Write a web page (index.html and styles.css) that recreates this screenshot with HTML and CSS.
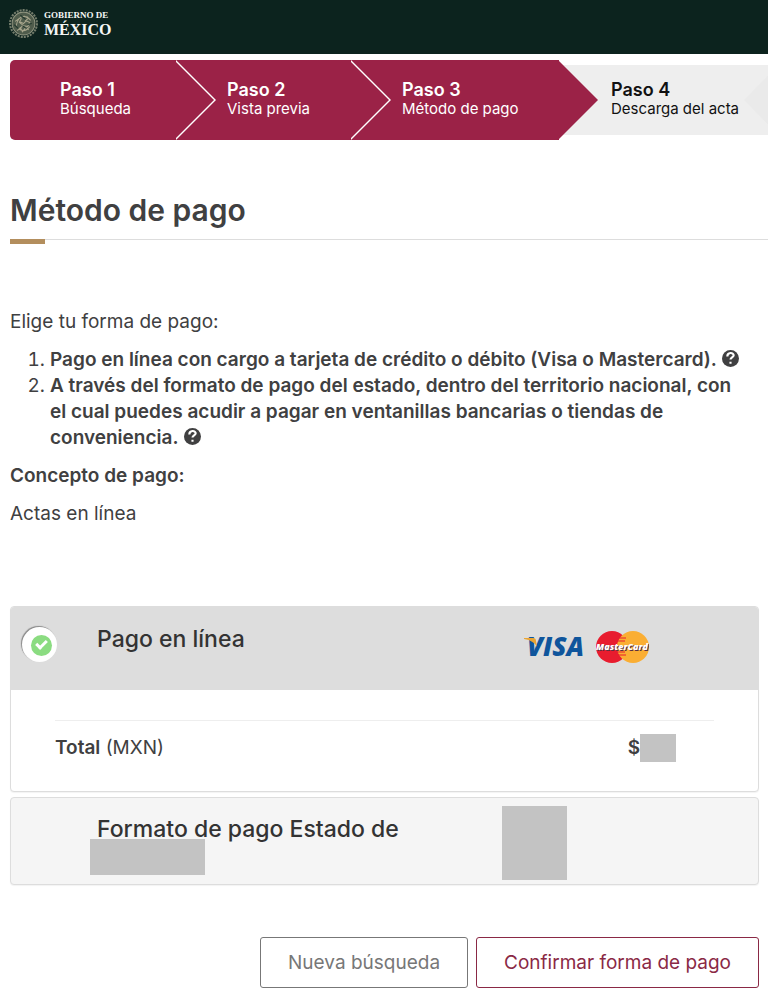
FILE: index.html
```html
<!DOCTYPE html>
<html lang="es">
<head>
  <meta charset="UTF-8">
  <meta name="viewport" content="width=device-width, initial-scale=1">
  <title>Método de pago</title>
  <link rel="stylesheet" href="styles.css">
</head>
<body>

<header class="header">
  <a href="#" class="brand">
    <svg class="seal" viewBox="0 0 30 30" fill="none" stroke="#8f947f">
      <circle cx="15" cy="15" r="13" stroke-width="2" stroke-dasharray="2 1" opacity=".8"/>
      <circle cx="15" cy="15" r="11" fill="#4f5c4c" stroke-width="1"/>
      <path d="M8 17c1-6 4-9 8-9l4 2-3 2 4 2-2 4-5-1-3 4M10 20c4 3 8 2 11-2M7 13l4-3M11 13l4 2 3-3M9 22l3-3 2 4 3-4 3 2M18 8l4 4M13 10l-2 4 4 3" stroke="#a7a58c" stroke-width="1"/>
      <path d="M6 16l4 4M12 7l5 4M19 16l4-1M14 17l4 3" stroke="#20362c"/>
    </svg>
    <span class="brandText">
      <small>GOBIERNO DE</small>
      <strong>MÉXICO</strong>
    </span>
  </a>
</header>

<ol class="steps">
  <li class="done"><strong>Paso 1</strong><span>Búsqueda</span></li>
  <li class="done"><strong>Paso 2</strong><span>Vista previa</span></li>
  <li class="done"><strong>Paso 3</strong><span>Método de pago</span></li>
  <li class="next"><strong>Paso 4</strong><span>Descarga del acta</span></li>
</ol>

<main class="content">
  <h1 class="title">Método de pago</h1>

  <section class="info">
    <p>Elige tu forma de pago:</p>
    <ol>
      <li><strong>Pago en línea con cargo a tarjeta de crédito o débito (Visa o Mastercard).</strong>
        <svg class="help" viewBox="0 0 16 16"><circle cx="8" cy="8" r="8" fill="#404041"/><path d="M5 6c0-4 6-4 6-1 0 2-3 2-3 4M8 11v2" fill="none" stroke="#fff" stroke-width="2"/></svg></li>
      <li><strong>A través del formato de pago del estado, dentro del territorio nacional, con el cual puedes acudir a pagar en ventanillas bancarias o tiendas de conveniencia.</strong>
        <svg class="help" viewBox="0 0 16 16"><circle cx="8" cy="8" r="8" fill="#404041"/><path d="M5 6c0-4 6-4 6-1 0 2-3 2-3 4M8 11v2" fill="none" stroke="#fff" stroke-width="2"/></svg></li>
    </ol>
    <p><strong>Concepto de pago:</strong></p>
    <p>Actas en línea</p>
  </section>

  <form class="payment">
    <div class="card">
      <div class="cardHead">
        <input type="radio" name="pago" id="enLinea" class="radio" checked>
        <label for="enLinea">Pago en línea</label>
        <svg class="cards" viewBox="0 0 128 36" role="img" aria-label="Visa y MasterCard">
          <text x="6" y="27" class="visa">VISA</text>
          <path d="M3 9h9c2 0 3 1 3 3l1 6c-2-4-6-7-13-8z" fill="#e9a534"/>
          <circle cx="91" cy="18" r="16" fill="#e81c2e"/>
          <circle cx="112" cy="18" r="16" fill="#faae33"/>
          <path d="M97 9h8M96 12h8M96 23h8M97 26h8" stroke="#e81c2e" stroke-width="1"/>
          <text x="75" y="21" class="master">MasterCard</text>
        </svg>
      </div>
      <div class="cardBody">
        <div class="total">
          <span><strong>Total</strong> (MXN)</span>
          <span class="amount"><strong>$</strong><i class="mask"></i></span>
        </div>
      </div>
    </div>

    <div class="card stateCard">
      <div class="stateName">Formato de pago Estado de<i class="mask"></i></div>
      <i class="mask stateLogo"></i>
    </div>

    <div class="btns">
      <button type="button" class="btn">Nueva búsqueda</button>
      <button type="submit" class="btn primary">Confirmar forma de pago</button>
    </div>
  </form>
</main>

</body>
</html>
```

FILE: styles.css
```css
* { margin: 0; padding: 0; box-sizing: border-box; }
body { background: #fff; color: #404041; overflow-x: hidden;
  font: 19px/26px Inter, "Open Sans", sans-serif; }
strong { font-weight: 600; }
i.mask { display: block; background: #c3c3c3; }

.header { height: 54px; padding: 8px; background: #0c231e; }
.brand { display: inline-flex; align-items: center; gap: 5px;
  color: #f5f7f5; text-decoration: none; }
.seal { width: 31px; height: 31px; }
.brandText { display: flex; flex-direction: column;
  font-family: "Liberation Serif", serif; }
.brandText small { font-size: 9px; line-height: 12px; font-weight: bold; }
.brandText strong { font-size: 16px; line-height: 18px; font-weight: bold; }

.steps { display: grid; grid-template-columns: 165fr 175fr 209fr 209fr;
  margin: 6px 0 0 10px; list-style: none; }
.steps li { position: relative; height: 80px; padding: 20px 0 0 52px; }
.steps li:first-child { padding-left: 50px; border-radius: 5px 0 0 5px; }
.steps strong { display: block; font-size: 18px; line-height: 20px; }
.steps span { display: block; font-size: 15px; line-height: 18px; white-space: nowrap; }
.steps .done { background: #9b2247; color: #fff; }
/* white edge under the chevron that closes each step */
.steps .done::before, .steps .done::after { content: ""; position: absolute;
  z-index: 1; left: 100%; top: 0; width: 40px; height: 80px; background: #fff;
  clip-path: polygon(0 0, 100% 50%, 0 100%); }
.steps .done::before { left: calc(100% + 1px); }
.steps .done::after { background: #9b2247; left: calc(100% - 1px); }
.steps .done:nth-child(3)::before { display: none; }
.steps .next { background: linear-gradient(#eee, #eee) 0 5px / 100% 70px no-repeat; color: #111; }
.steps .next::after { content: ""; position: absolute; right: 0; top: 5px;
  width: 24px; height: 70px; background: #eaeaea;
  clip-path: polygon(0 50%, 100% 15%, 100% 85%); }

.title { position: relative; margin: 52px 0 0 10px; padding-bottom: 11px;
  border-bottom: 1px solid #ddd; font-size: 30px; line-height: 36px; font-weight: 600; }
.title::after { content: ""; position: absolute; left: 0; top: 100%;
  width: 35px; height: 5px; background: #b38e5d; }

.info { margin: 69px 10px 0; }
.info p, .info ol { margin-bottom: 12px; }
.info ol { padding: 0 12px 0 40px; }
.info .help { width: 17px; height: 17px; vertical-align: -1px; }

.payment { margin: 79px 9px 0 10px; }
.card { margin-bottom: 5px; border: 1px solid #ddd; border-radius: 4px;
  background: #fff; box-shadow: 0 1px 1px rgba(0,0,0,.05); overflow: hidden; }
.cardHead { display: flex; align-items: center; height: 83px;
  padding: 0 109px 0 11px; background: #ddd; }
.cardHead label { flex: 1; margin: 0 0 20px 40px;
  color: #333; font-size: 23px; font-weight: 500; }
.radio { appearance: none; position: relative; width: 35px; height: 35px;
  margin-top: -8px; border-radius: 50%; box-shadow: -1px -1px 1px #888;
  background: #fff; }
.radio:checked::before { content: ""; position: absolute; left: 9px; top: 8px;
  width: 21px; height: 21px; border-radius: 50%; background: #8bdc81; }
.radio:checked::after { content: ""; position: absolute; left: 14px; top: 13px;
  width: 8px; height: 4px; border: solid #fff; border-width: 0 0 3px 3px;
  transform: rotate(-45deg); }
.cards { width: 128px; height: 36px; margin-top: -4px; }
.visa { font: italic 800 26px "Open Sans", sans-serif; fill: #0f559c; }
.master { font: italic 800 9px "Open Sans", sans-serif; fill: #fff;
  text-shadow: 1px 1px 0 #5b3040; }
.cardBody { padding: 30px 44px 29px; }
.total { display: flex; justify-content: space-between; align-items: center;
  padding: 13px 38px 0 0; border-top: 1px solid #eee; }
.amount { display: flex; align-items: center; }
.amount .mask { width: 36px; height: 28px; }
.stateCard { display: flex; justify-content: space-between; height: 88px;
  background: #f5f5f5; }
.stateName { padding: 18px 0 0 86px; color: #333;
  font-size: 23px; font-weight: 500; }
.stateName .mask { width: 115px; height: 36px; margin: -3px 0 0 -7px; }
.stateLogo { width: 65px; height: 74px; margin: 8px 191px 0 0; }

.btns { display: flex; justify-content: flex-end; gap: 8px; margin: 52px 0 3px; }
.btn { height: 51px; padding: 0 27px; border: 1px solid #777;
  border-radius: 3px; background: #fff; color: #777; cursor: pointer;
  font: 19px/26px Inter, "Open Sans", sans-serif; }
.primary { border-color: #8a2945; color: #8a2945; }
```
